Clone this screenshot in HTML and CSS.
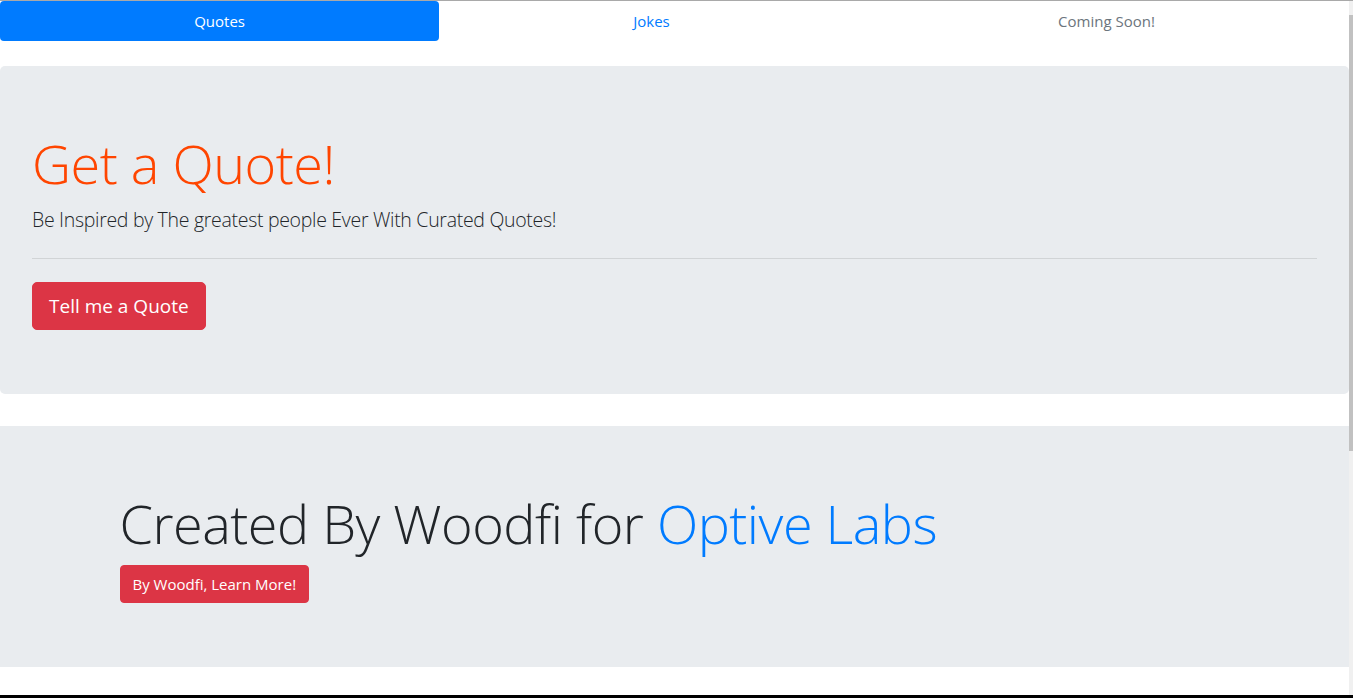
FILE: index.html
```html
<!DOCTYPE html>
<html lang="en">
<head>
    <meta charset="UTF-8">
    <meta name="viewport" content="width=device-width, initial-scale=1.0">
    <title>Quotes</title>
    <link rel="stylesheet" href="styles.css">
</head>
<body>
    <div class="page">
        <ul class="nav-pills">
            <li class="nav-item"><a class="nav-link active" href="#">Quotes</a></li>
            <li class="nav-item"><a class="nav-link" href="#">Jokes</a></li>
            <li class="nav-item"><a class="nav-link disabled" href="#">Coming Soon!</a></li>
        </ul>

        <div class="jumbotron">
            <h1 class="display-4 quote-title">Get a Quote!</h1>
            <p class="lead">Be Inspired by The greatest people Ever With Curated Quotes!</p>
            <hr class="divider">
            <button class="btn btn-danger btn-lg">Tell me a Quote</button>
        </div>

        <div class="jumbotron jumbotron-fluid">
            <div class="container">
                <h1 class="display-4">Created By Woodfi for <span class="brand">Optive Labs</span></h1>
                <button class="btn btn-danger">By Woodfi, Learn More!</button>
            </div>
        </div>
    </div>

    <div class="scrollbar"><div class="thumb"></div></div>
    <div class="bottom-edge"></div>
</body>
</html>
```

FILE: styles.css
```css
:root {
    --blue: #007bff;
    --red: #dc3545;
    --gray: #6c757d;
    --light: #e9ecef;
    --text: #212529;
}

*, *::before, *::after {
    box-sizing: border-box;
}

html, body {
    margin: 0;
    padding: 0;
    overflow: hidden;
}

body {
    font-family: 'Open Sans', 'Noto Sans', sans-serif;
    font-size: 16px;
    line-height: 1.5;
    color: var(--text);
    background: #fff;
    border-top: 1px solid #a9a9a9;
}

.page {
    margin-right: 4px;
}

.nav-pills {
    display: flex;
    list-style: none;
    margin: 0;
    padding: 0;
}

.nav-item {
    flex: 1 1 auto;
    text-align: center;
}

.nav-link {
    display: block;
    padding: 8px 16px;
    color: var(--blue);
    text-decoration: none;
    border-radius: 4px;
    font-size: 15px;
    line-height: 24px;
}

.nav-link.active {
    background-color: var(--blue);
    color: #fff;
}

.nav-link.disabled {
    color: var(--gray);
}

.jumbotron {
    background-color: var(--light);
    border-radius: 5px;
    padding: 64px 32px;
    margin: 25px 0 32px;
}

.jumbotron-fluid {
    border-radius: 0;
    padding: 64px 0;
    margin: 0;
}

.container {
    max-width: 1140px;
    margin: 0 auto;
    padding: 0 15px;
}

.display-4 {
    font-size: 54px;
    font-weight: 300;
    letter-spacing: -0.5px;
    line-height: 67px;
    margin: 0 0 8px;
}

.quote-title {
    color: orangered;
}

.brand {
    color: var(--blue);
}

.lead {
    font-size: 19.5px;
    font-weight: 300;
    letter-spacing: -0.3px;
    line-height: 30px;
    margin: 0 0 16px;
}

.divider {
    border: 0;
    border-top: 1px solid rgba(0,0,0,0.1);
    margin: 23px 0;
}

.btn {
    font-family: inherit;
    font-size: 15px;
    line-height: 24px;
    padding: 6px 12px;
    border: 1px solid transparent;
    border-radius: 4px;
    cursor: pointer;
}

.btn-danger {
    background-color: var(--red);
    border-color: var(--red);
    color: #fff;
}

.btn-lg {
    font-size: 19px;
    line-height: 30px;
    padding: 8px 16px;
    border-radius: 5px;
}

.scrollbar {
    position: fixed;
    top: 1px;
    right: 0;
    width: 4px;
    height: 100%;
    background: #f0f0f0;
}

.thumb {
    margin-top: 14px;
    height: 436px;
    background: #c1c1c1;
}

.bottom-edge {
    position: fixed;
    left: 0;
    right: 0;
    bottom: 0;
    height: 3px;
    background: #000;
}
```
